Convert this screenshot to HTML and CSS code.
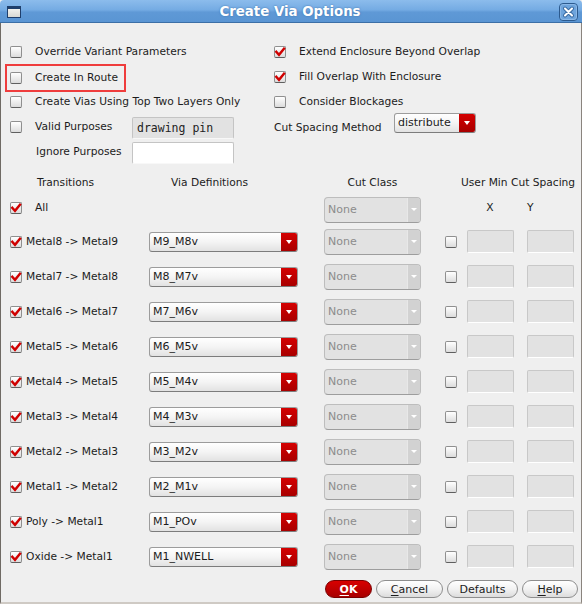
FILE: index.html
```html
<!DOCTYPE html>
<html>
<head>
<meta charset="utf-8">
<link rel="stylesheet" href="styles.css">
</head>
<body>
<div class="window">
  <div class="titlebar">
    <span class="win-icon"></span>
    <span class="title">Create Via Options</span>
    <span class="close">
      <svg width="19" height="18" viewBox="0 0 19 18">
        <rect x="0.5" y="0.5" width="18" height="17" rx="3.5" fill="#6ea4dc" stroke="#2c5a8e"/>
        <rect x="1.5" y="1.5" width="16" height="15" rx="2.5" fill="none" stroke="#9cc4ee" stroke-opacity="0.6"/>
        <path d="M6 5.5 L13 12.5 M13 5.5 L6 12.5" stroke="#3b6ca3" stroke-width="4" stroke-linecap="round"/>
        <path d="M6 5.5 L13 12.5 M13 5.5 L6 12.5" stroke="#ffffff" stroke-width="2" stroke-linecap="round"/>
      </svg>
    </span>
  </div>
  <div class="body">
    <div class="opts">
      <div class="opt"><span class="cb"></span><span>Override Variant Parameters</span></div>
      <div class="opt"><span class="cb on"><svg viewBox="0 0 12 12"><path d="M2.3 5.8 L5 8.8 L10 2.6"/></svg></span><span>Extend Enclosure Beyond Overlap</span></div>
      <div class="opt"><span class="hl"><span class="cb"></span><span>Create In Route</span></span></div>
      <div class="opt"><span class="cb on"><svg viewBox="0 0 12 12"><path d="M2.3 5.8 L5 8.8 L10 2.6"/></svg></span><span>Fill Overlap With Enclosure</span></div>
      <div class="opt"><span class="cb"></span><span>Create Vias Using Top Two Layers Only</span></div>
      <div class="opt"><span class="cb"></span><span>Consider Blockages</span></div>
      <div class="opt"><span class="cb"></span><span class="plabel">Valid Purposes</span><span class="field gray">drawing pin</span></div>
      <div class="opt rc"><span class="mlabel">Cut Spacing Method</span><span class="combo small"><span class="ctext">distribute</span><span class="carrow"></span></span></div>
      <div class="opt"><span class="cbslot"></span><span class="plabel ind">Ignore Purposes</span><span class="field white"></span></div>
      <div class="opt"></div>
    </div>

    <div class="grid">
      <div class="hdr c1"><span class="h-trans">Transitions</span></div>
      <div class="hdr c2"><span class="h-via">Via Definitions</span></div>
      <div class="hdr c4 center">Cut Class</div>
      <div class="hdr cspan">User Min Cut Spacing</div>

      <div class="allrow c1"><span class="cb on"><svg viewBox="0 0 12 12"><path d="M2.3 5.8 L5 8.8 L10 2.6"/></svg></span><span class="alltxt">All</span></div>
      <div class="allrow-c c4"><span class="dcombo"><span class="dtext">None</span><span class="darrow"></span></span></div>
      <div class="allrow c8 center xy">X</div>
      <div class="allrow c10 xy ylab">Y</div>

      <div class="row c1"><span class="cb on"><svg viewBox="0 0 12 12"><path d="M2.3 5.8 L5 8.8 L10 2.6"/></svg></span><span class="tlabel">Metal8 -&gt; Metal9</span></div>
      <div class="row c2"><span class="combo"><span class="ctext">M9_M8v</span><span class="carrow"></span></span></div>
      <div class="row c4"><span class="dcombo"><span class="dtext">None</span><span class="darrow"></span></span></div>
      <div class="row c6"><span class="cb"></span></div>
      <div class="row c8"><span class="num"></span></div>
      <div class="row c10"><span class="num"></span></div>

      <div class="row c1"><span class="cb on"><svg viewBox="0 0 12 12"><path d="M2.3 5.8 L5 8.8 L10 2.6"/></svg></span><span class="tlabel">Metal7 -&gt; Metal8</span></div>
      <div class="row c2"><span class="combo"><span class="ctext">M8_M7v</span><span class="carrow"></span></span></div>
      <div class="row c4"><span class="dcombo"><span class="dtext">None</span><span class="darrow"></span></span></div>
      <div class="row c6"><span class="cb"></span></div>
      <div class="row c8"><span class="num"></span></div>
      <div class="row c10"><span class="num"></span></div>

      <div class="row c1"><span class="cb on"><svg viewBox="0 0 12 12"><path d="M2.3 5.8 L5 8.8 L10 2.6"/></svg></span><span class="tlabel">Metal6 -&gt; Metal7</span></div>
      <div class="row c2"><span class="combo"><span class="ctext">M7_M6v</span><span class="carrow"></span></span></div>
      <div class="row c4"><span class="dcombo"><span class="dtext">None</span><span class="darrow"></span></span></div>
      <div class="row c6"><span class="cb"></span></div>
      <div class="row c8"><span class="num"></span></div>
      <div class="row c10"><span class="num"></span></div>

      <div class="row c1"><span class="cb on"><svg viewBox="0 0 12 12"><path d="M2.3 5.8 L5 8.8 L10 2.6"/></svg></span><span class="tlabel">Metal5 -&gt; Metal6</span></div>
      <div class="row c2"><span class="combo"><span class="ctext">M6_M5v</span><span class="carrow"></span></span></div>
      <div class="row c4"><span class="dcombo"><span class="dtext">None</span><span class="darrow"></span></span></div>
      <div class="row c6"><span class="cb"></span></div>
      <div class="row c8"><span class="num"></span></div>
      <div class="row c10"><span class="num"></span></div>

      <div class="row c1"><span class="cb on"><svg viewBox="0 0 12 12"><path d="M2.3 5.8 L5 8.8 L10 2.6"/></svg></span><span class="tlabel">Metal4 -&gt; Metal5</span></div>
      <div class="row c2"><span class="combo"><span class="ctext">M5_M4v</span><span class="carrow"></span></span></div>
      <div class="row c4"><span class="dcombo"><span class="dtext">None</span><span class="darrow"></span></span></div>
      <div class="row c6"><span class="cb"></span></div>
      <div class="row c8"><span class="num"></span></div>
      <div class="row c10"><span class="num"></span></div>

      <div class="row c1"><span class="cb on"><svg viewBox="0 0 12 12"><path d="M2.3 5.8 L5 8.8 L10 2.6"/></svg></span><span class="tlabel">Metal3 -&gt; Metal4</span></div>
      <div class="row c2"><span class="combo"><span class="ctext">M4_M3v</span><span class="carrow"></span></span></div>
      <div class="row c4"><span class="dcombo"><span class="dtext">None</span><span class="darrow"></span></span></div>
      <div class="row c6"><span class="cb"></span></div>
      <div class="row c8"><span class="num"></span></div>
      <div class="row c10"><span class="num"></span></div>

      <div class="row c1"><span class="cb on"><svg viewBox="0 0 12 12"><path d="M2.3 5.8 L5 8.8 L10 2.6"/></svg></span><span class="tlabel">Metal2 -&gt; Metal3</span></div>
      <div class="row c2"><span class="combo"><span class="ctext">M3_M2v</span><span class="carrow"></span></span></div>
      <div class="row c4"><span class="dcombo"><span class="dtext">None</span><span class="darrow"></span></span></div>
      <div class="row c6"><span class="cb"></span></div>
      <div class="row c8"><span class="num"></span></div>
      <div class="row c10"><span class="num"></span></div>

      <div class="row c1"><span class="cb on"><svg viewBox="0 0 12 12"><path d="M2.3 5.8 L5 8.8 L10 2.6"/></svg></span><span class="tlabel">Metal1 -&gt; Metal2</span></div>
      <div class="row c2"><span class="combo"><span class="ctext">M2_M1v</span><span class="carrow"></span></span></div>
      <div class="row c4"><span class="dcombo"><span class="dtext">None</span><span class="darrow"></span></span></div>
      <div class="row c6"><span class="cb"></span></div>
      <div class="row c8"><span class="num"></span></div>
      <div class="row c10"><span class="num"></span></div>

      <div class="row c1"><span class="cb on"><svg viewBox="0 0 12 12"><path d="M2.3 5.8 L5 8.8 L10 2.6"/></svg></span><span class="tlabel">Poly -&gt; Metal1</span></div>
      <div class="row c2"><span class="combo"><span class="ctext">M1_POv</span><span class="carrow"></span></span></div>
      <div class="row c4"><span class="dcombo"><span class="dtext">None</span><span class="darrow"></span></span></div>
      <div class="row c6"><span class="cb"></span></div>
      <div class="row c8"><span class="num"></span></div>
      <div class="row c10"><span class="num"></span></div>

      <div class="row c1"><span class="cb on"><svg viewBox="0 0 12 12"><path d="M2.3 5.8 L5 8.8 L10 2.6"/></svg></span><span class="tlabel">Oxide -&gt; Metal1</span></div>
      <div class="row c2"><span class="combo"><span class="ctext">M1_NWELL</span><span class="carrow"></span></span></div>
      <div class="row c4"><span class="dcombo"><span class="dtext">None</span><span class="darrow"></span></span></div>
      <div class="row c6"><span class="cb"></span></div>
      <div class="row c8"><span class="num"></span></div>
      <div class="row c10"><span class="num"></span></div>
    </div>

    <div class="buttons">
      <span class="btn ok"><u>O</u>K</span>
      <span class="btn cancel"><u>C</u>ancel</span>
      <span class="btn defaults">Defaults</span>
      <span class="btn help"><u>H</u>elp</span>
    </div>
  </div>
</div>
</body>
</html>
```

FILE: styles.css
```css
html, body {
  margin: 0;
  padding: 0;
  background: #efefef;
}
.window {
  width: 582px;
  height: 604px;
  box-sizing: border-box;
  font-family: "DejaVu Sans", "Liberation Sans", sans-serif;
  font-size: 10.667px;
  color: #1c1c1c;
  background: #efefef;
  display: flex;
  flex-direction: column;
}
.titlebar {
  height: 23px;
  flex: 0 0 23px;
  box-sizing: border-box;
  display: flex;
  align-items: center;
  padding: 0 4px 0 7px;
  background: linear-gradient(#8cbcec 0%, #74abe3 45%, #5f99d6 55%, #5a95d3 100%);
  border-bottom: 1px solid #3c6fa6;
  border-radius: 4px 4px 0 0;
}
.win-icon {
  width: 14px;
  height: 12px;
  box-sizing: border-box;
  border: 1px solid #1f3f6c;
  border-top-width: 3px;
  background: linear-gradient(#f2f2ee, #d9d9d3);
  margin-top: 1px;
}
.title {
  flex: 1;
  text-align: center;
  color: #ffffff;
  font-weight: bold;
  font-size: 13.333px;
  text-shadow: 0 0 2px #3a6ea8;
}
.close {
  width: 19px;
  height: 18px;
  display: flex;
  margin-top: 1px;
}
.body {
  flex: 1;
  border-left: 1px solid #6f6a64;
  border-right: 1px solid #8a847e;
  border-bottom: 2px solid #cfcac4;
  display: flex;
  flex-direction: column;
}
.opts {
  display: grid;
  grid-template-columns: 264px 1fr;
  grid-auto-rows: 25px;
  padding: 16px 0 0 9px;
}
.opt {
  display: flex;
  align-items: center;
  white-space: nowrap;
}
.cb {
  width: 12px;
  height: 12px;
  flex: 0 0 12px;
  box-sizing: border-box;
  border: 1px solid #8f8f8f;
  border-bottom-color: #5f5f5f;
  border-radius: 2px;
  background: linear-gradient(#ffffff, #dcdcdc);
  margin-right: 13px;
  display: inline-flex;
  position: relative;
}
.cb svg {
  width: 12px;
  height: 12px;
  margin: -1px;
}
.cb svg path {
  fill: none;
  stroke: #d00000;
  stroke-width: 2.4;
  stroke-linecap: square;
}
.hl {
  display: inline-flex;
  align-items: center;
  border: 2px solid #ef3d3d;
  height: 28px;
  box-sizing: border-box;
  margin: 2px 0 0 -5px;
  padding: 0 6px 0 3px;
}
.plabel {
  width: 97px;
}
.plabel.ind {
  width: 96px;
  padding-left: 1px;
}
.cbslot {
  width: 12px;
  margin-right: 13px;
}
.field {
  width: 102px;
  height: 22px;
  box-sizing: border-box;
  border: 1px solid #c4c4c4;
  border-bottom-color: #f8f8f8;
  border-radius: 2px;
  font-family: "DejaVu Sans Mono", monospace;
  font-size: 11.5px;
  padding: 3px 0 0 4px;
  color: #222;
}
.field.gray {
  background: #e2e2e2;
  margin-top: 2px;
}
.field.white {
  background: #ffffff;
  margin-top: 2px;
}
.rc {
  align-items: flex-start;
}
.mlabel {
  width: 120px;
  padding-top: 7px;
}
.combo {
  display: flex;
  width: 149px;
  height: 20px;
  box-sizing: border-box;
  border: 1px solid #9c9c9c;
  border-bottom-color: #7c7c7c;
  border-radius: 3px;
  background: linear-gradient(#ffffff 0%, #f4f4f4 50%, #e2e2e2 100%);
  overflow: hidden;
}
.combo.small {
  width: 82px;
  height: 20px;
  margin-top: -1px;
}
.ctext {
  flex: 1;
  padding-left: 3px;
  line-height: 17px;
  font-size: 11px;
}
.carrow {
  width: 16px;
  flex: 0 0 16px;
  background: linear-gradient(#d40000, #a80000);
  position: relative;
  display: flex;
  align-items: center;
  justify-content: center;
}
.carrow::after {
  content: "";
  width: 0;
  height: 0;
  border-left: 3.5px solid transparent;
  border-right: 3.5px solid transparent;
  border-top: 4px solid #ffffff;
}
.grid {
  display: grid;
  grid-template-columns: 139px 149px 26px 97px 24px 12px 10px 47px 13px 47px;
  grid-template-rows: 25px 29px repeat(10, 35px);
  padding: 6px 0 0 9px;
}
.hdr {
  display: flex;
  align-items: center;
  white-space: nowrap;
}
.c1 { grid-column: 1; }
.c2 { grid-column: 2; }
.c4 { grid-column: 4; }
.c6 { grid-column: 6; }
.c8 { grid-column: 8; }
.c10 { grid-column: 10; }
.cspan { grid-column: 6 / 11; padding-left: 16px; }
.center { justify-content: center; }
.h-trans { padding-left: 27px; }
.h-via { padding-left: 22px; }
.allrow {
  display: flex;
  align-items: center;
  margin-bottom: 4px;
}
.allrow-c {
  display: flex;
  align-items: center;
}
.alltxt { padding-left: 0; }
.xy { padding-right: 1px; }
.ylab { padding-left: 0; }
.row {
  display: flex;
  align-items: center;
  white-space: nowrap;
}
.row .cb { margin-right: 4px; }
.row.c6 .cb { margin-right: 0; }
.tlabel { font-size: 10.667px; }
.dcombo {
  display: flex;
  width: 97px;
  height: 26px;
  box-sizing: border-box;
  border: 1px solid #bdbdbd;
  border-bottom-color: #9d9d9d;
  border-radius: 4px;
  background: #e2e2e2;
  overflow: hidden;
}
.dtext {
  flex: 1;
  color: #8c8c8c;
  padding-left: 3px;
  line-height: 24px;
  font-size: 11px;
}
.darrow {
  width: 12px;
  flex: 0 0 12px;
  background: #d2d2d2;
  border-left: 1px solid #e8e8e8;
  display: flex;
  align-items: center;
  justify-content: center;
}
.darrow::after {
  content: "";
  width: 0;
  height: 0;
  border-left: 3px solid transparent;
  border-right: 3px solid transparent;
  border-top: 3px solid #ffffff;
}
.num {
  width: 47px;
  height: 23px;
  box-sizing: border-box;
  background: #e2e2e2;
  border: 1px solid #c8c8c8;
  border-bottom-color: #ffffff;
  border-radius: 2px;
}
.buttons {
  display: flex;
  justify-content: flex-end;
  gap: 4px;
  padding: 6px 3px 0 0;
}
.btn {
  height: 18px;
  box-sizing: border-box;
  border: 1px solid #8e8e8e;
  border-radius: 9px;
  background: linear-gradient(#ffffff 0%, #f2f2f2 50%, #dcdcdc 100%);
  display: flex;
  align-items: center;
  justify-content: center;
  font-size: 11px;
  color: #1c1c1c;
}
.btn u { text-decoration: underline; text-underline-offset: 2px; }
.ok {
  width: 47px;
  background: linear-gradient(#d80000, #a80000);
  border-color: #7a0000;
  color: #ffffff;
  font-weight: bold;
}
.cancel { width: 67px; }
.defaults { width: 71px; }
.help { width: 56px; }
```
